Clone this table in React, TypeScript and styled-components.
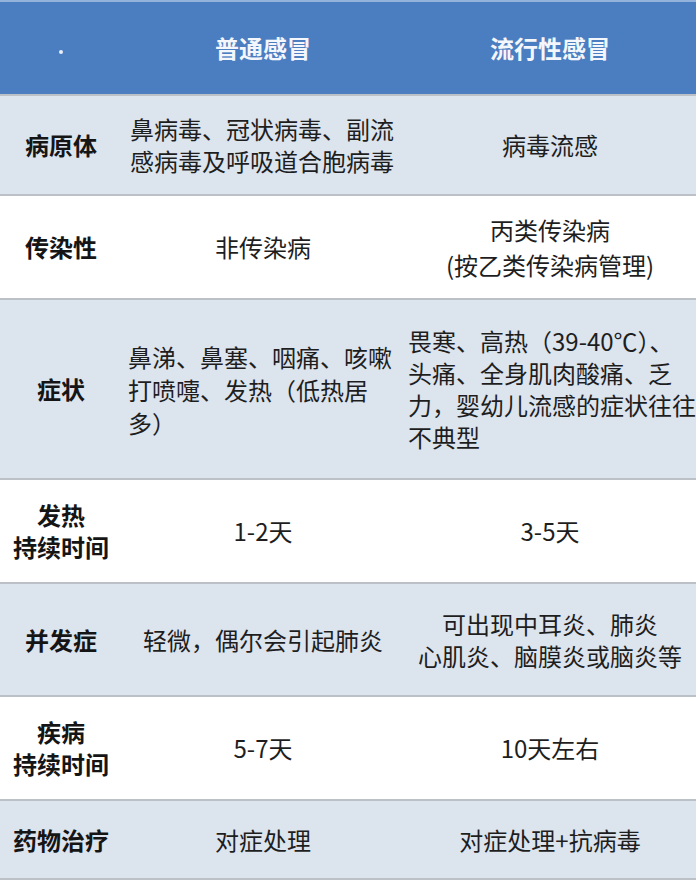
import styled, { createGlobalStyle } from "styled-components"

const GlobalStyle = createGlobalStyle`
  html, body {
    margin: 0;
    padding: 0;
    background: #ffffff;
  }
  body {
    font-family: "Noto Sans CJK SC", "Noto Sans", sans-serif;
    color: #1c1c1c;
  }
`

const COLUMNS = "122px 282px 292px"

const Table = styled.div`
  width: 696px;
  height: 880px;
  overflow: hidden;
  display: flex;
  flex-direction: column;
`

const HeaderRow = styled.div`
  display: grid;
  grid-template-columns: ${COLUMNS};
  height: 94px;
  box-sizing: border-box;
  background: #4b7dc1;
  border-top: 2px solid #93b2dc;
`

const HeaderCell = styled.div`
  display: flex;
  align-items: center;
  justify-content: center;
  padding-bottom: 2px;
  font-size: 24px;
  font-weight: 700;
  color: #f3f6fb;
`

const Dot = styled.span`
  display: block;
  width: 4px;
  height: 4px;
  margin-top: 10px;
  border-radius: 50%;
  background: #e9eff8;
`

const Row = styled.div<{ $h: number; $shade?: boolean; $last?: boolean }>`
  display: grid;
  grid-template-columns: ${COLUMNS};
  height: ${(p) => p.$h}px;
  box-sizing: border-box;
  background: ${(p) => (p.$shade ? "#dce4ee" : "#ffffff")};
  border-top: 2px solid #bcc1c8;
  border-bottom: ${(p) => (p.$last ? "2px solid #bcc1c8" : "none")};
`

const LabelCell = styled.div<{ $lh?: number }>`
  display: flex;
  align-items: center;
  justify-content: center;
  text-align: center;
  font-size: 24px;
  line-height: ${(p) => p.$lh ?? 32}px;
  font-weight: 700;
  color: #151515;
  white-space: nowrap;
`

const ValueCell = styled.div<{ $lh?: number; $left?: boolean; $pad?: number }>`
  display: flex;
  align-items: center;
  justify-content: ${(p) => (p.$left ? "flex-start" : "center")};
  text-align: ${(p) => (p.$left ? "left" : "center")};
  padding-left: ${(p) => p.$pad ?? 0}px;
  font-size: 24px;
  line-height: ${(p) => p.$lh ?? 32}px;
  color: #1e1e1e;
  white-space: nowrap;
`

export default function App() {
  return (
    <>
      <GlobalStyle />
      <Table>
        <HeaderRow>
          <HeaderCell>
            <Dot />
          </HeaderCell>
          <HeaderCell>普通感冒</HeaderCell>
          <HeaderCell>流行性感冒</HeaderCell>
        </HeaderRow>

        <Row $h={100} $shade>
          <LabelCell>病原体</LabelCell>
          <ValueCell $lh={32} $left $pad={8}>
            <div>
              鼻病毒、冠状病毒、副流
              <br />
              感病毒及呼吸道合胞病毒
            </div>
          </ValueCell>
          <ValueCell>病毒流感</ValueCell>
        </Row>

        <Row $h={104}>
          <LabelCell>传染性</LabelCell>
          <ValueCell>非传染病</ValueCell>
          <ValueCell $lh={35}>
            <div>
              丙类传染病
              <br />
              (按乙类传染病管理)
            </div>
          </ValueCell>
        </Row>

        <Row $h={180} $shade>
          <LabelCell>症状</LabelCell>
          <ValueCell $lh={33} $left $pad={6}>
            <div>
              鼻涕、鼻塞、咽痛、咳嗽
              <br />
              打喷嚏、发热（低热居
              <br />
              多）
            </div>
          </ValueCell>
          <ValueCell $lh={32} $left $pad={4}>
            <div>
              畏寒、高热（39-40℃）、
              <br />
              头痛、全身肌肉酸痛、乏
              <br />
              力，婴幼儿流感的症状往往
              <br />
              不典型
            </div>
          </ValueCell>
        </Row>

        <Row $h={104}>
          <LabelCell $lh={32}>
            <div>
              发热
              <br />
              持续时间
            </div>
          </LabelCell>
          <ValueCell>1-2天</ValueCell>
          <ValueCell>3-5天</ValueCell>
        </Row>

        <Row $h={113} $shade>
          <LabelCell>并发症</LabelCell>
          <ValueCell>轻微，偶尔会引起肺炎</ValueCell>
          <ValueCell $lh={32}>
            <div>
              可出现中耳炎、肺炎
              <br />
              心肌炎、脑膜炎或脑炎等
            </div>
          </ValueCell>
        </Row>

        <Row $h={104}>
          <LabelCell $lh={32}>
            <div>
              疾病
              <br />
              持续时间
            </div>
          </LabelCell>
          <ValueCell>5-7天</ValueCell>
          <ValueCell>10天左右</ValueCell>
        </Row>

        <Row $h={81} $shade $last>
          <LabelCell>药物治疗</LabelCell>
          <ValueCell>对症处理</ValueCell>
          <ValueCell>对症处理+抗病毒</ValueCell>
        </Row>
      </Table>
    </>
  )
}
